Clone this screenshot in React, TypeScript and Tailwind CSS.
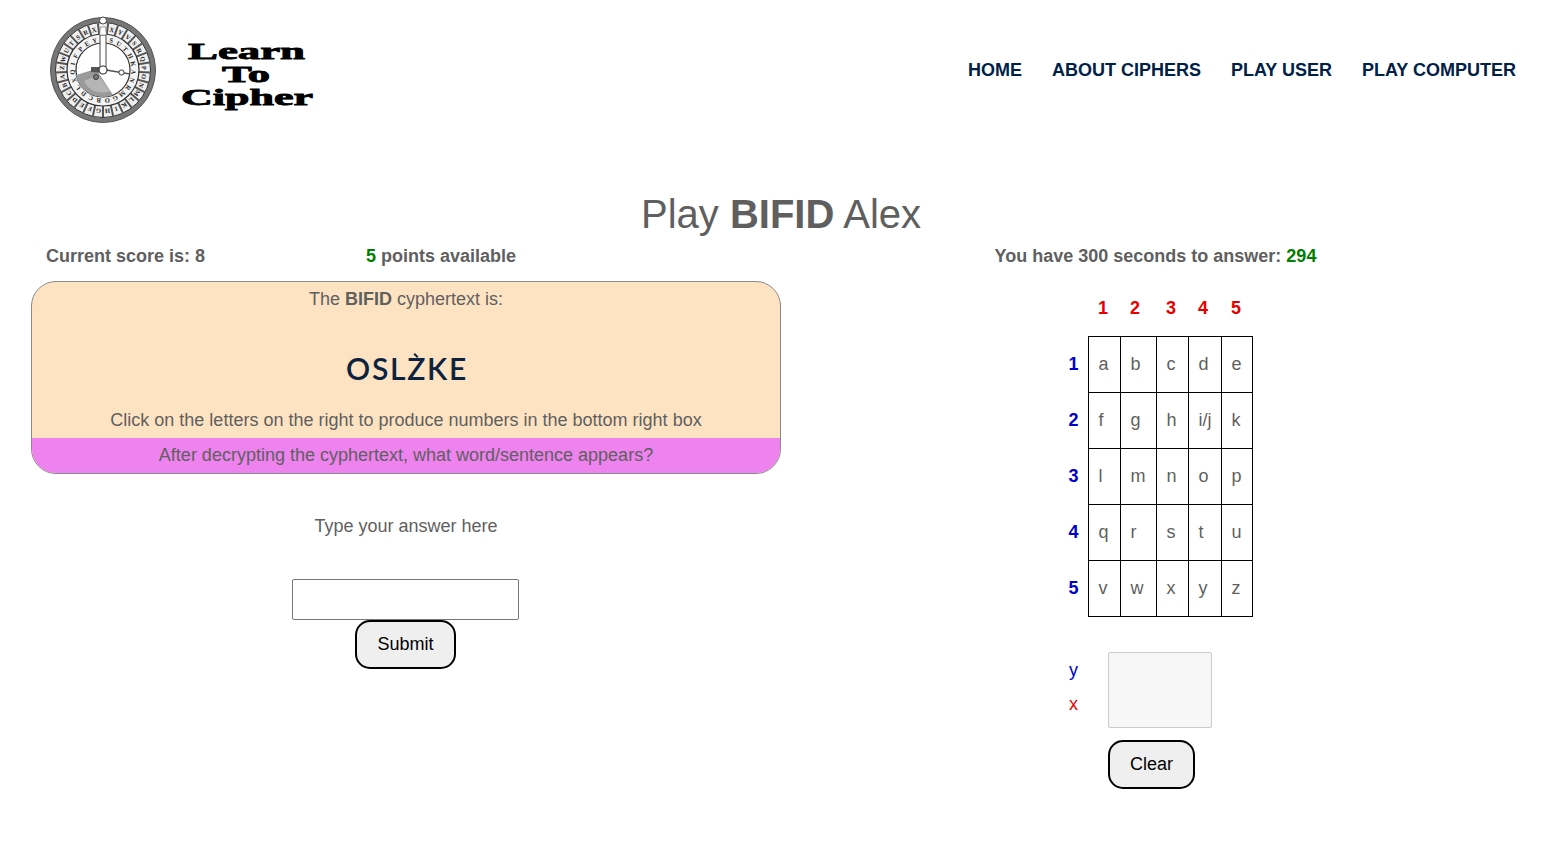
const sans = 'font-["Liberation_Sans",Arial,sans-serif]'

const navItems = ['HOME', 'ABOUT CIPHERS', 'PLAY USER', 'PLAY COMPUTER']
const colNumbers = [1, 2, 3, 4, 5]
const colWidths = ['w-[32px]', 'w-[36px]', 'w-[32px]', 'w-[33px]', 'w-[31px]']
const grid = [
  ['a', 'b', 'c', 'd', 'e'],
  ['f', 'g', 'h', 'i/j', 'k'],
  ['l', 'm', 'n', 'o', 'p'],
  ['q', 'r', 's', 't', 'u'],
  ['v', 'w', 'x', 'y', 'z'],
]

const outerLetters = 'TXYVSRQPONMLKIHGFEDCBAZWUTSRX'.split('')
const innerLetters = 'ZSUTHKANRMGOBCDLXQIFPEY'.split('')

// cipher wheel from the logo
function Wheel() {
  return (
    <g>
      <circle cx="55" cy="55" r="52.5" fill="#777" stroke="#555" strokeWidth="1" />
      <circle cx="55" cy="55" r="47.5" fill="#efefef" stroke="#333" strokeWidth="1" />
      {outerLetters.map((_, i) => (
        <line
          key={i}
          x1="55"
          y1="8"
          x2="55"
          y2="19"
          stroke="#555"
          strokeWidth="2"
          transform={`rotate(${((i + 0.5) * 360) / outerLetters.length} 55 55)`}
        />
      ))}
      {outerLetters.map((l, i) => (
        <text
          key={i}
          x="55"
          y="16"
          textAnchor="middle"
          fontSize="6.5"
          fontWeight="700"
          fontFamily="Liberation Serif, serif"
          fill="#222"
          transform={`rotate(${(i * 360) / outerLetters.length} 55 55)`}
        >
          {l}
        </text>
      ))}
      <circle cx="55" cy="55" r="36" fill="#f4f4f4" stroke="#333" strokeWidth="1.2" />
      <circle cx="55" cy="55" r="27" fill="#fff" stroke="#333" strokeWidth="1.2" />
      {innerLetters.map((l, i) => (
        <text
          key={i}
          x="55"
          y="26.5"
          textAnchor="middle"
          fontSize="6.5"
          fontWeight="700"
          fontFamily="Liberation Serif, serif"
          fill="#222"
          transform={`rotate(${(i * 360) / innerLetters.length} 55 55)`}
        >
          {l}
        </text>
      ))}
      <path d="M28 60 L48 54 L65 80 A27 27 0 0 1 28 60 Z" fill="#9a9a9a" />
      <path d="M36 66 L50 60 L62 76 A20 20 0 0 1 36 66 Z" fill="#b5b5b5" />
      <path d="M52 20 h6 v32 h-6 z" fill="#fff" stroke="#444" strokeWidth="1" />
      <path d="M52.5 12 h5 l1 8 h-7 z" fill="#fff" stroke="#666" strokeWidth="0.6" />
      <path d="M43 52 L55 52 L55 58 L43 57 Z" fill="#555" />
      <line x1="58" y1="55" x2="82" y2="59" stroke="#555" strokeWidth="1.6" />
      <circle cx="73.5" cy="57.5" r="2.6" fill="#fff" stroke="#333" strokeWidth="1" />
      <circle cx="55" cy="55" r="4" fill="#fff" stroke="#333" strokeWidth="1.2" />
      <circle cx="48" cy="62" r="2.6" fill="#777" stroke="#333" strokeWidth="0.8" />
      <circle cx="55" cy="5.5" r="3.5" fill="#fff" stroke="#444" strokeWidth="1" />
    </g>
  )
}

function Logo() {
  const word = (text: string, x: number, y: number, len: number) => (
    <text
      x={x}
      y={y}
      textLength={len}
      lengthAdjust="spacingAndGlyphs"
      fontFamily="Liberation Serif, serif"
      fontWeight="700"
      fontSize="23"
      fill="#000"
      stroke="#000"
      strokeWidth="0.8"
    >
      {text}
    </text>
  )
  return (
    <svg width="270" height="110" viewBox="0 0 270 110" className="block">
      <Wheel />
      {word('Learn', 140, 44, 117)}
      {word('To', 174, 67, 48)}
      {word('Cipher', 133, 90, 132)}
    </svg>
  )
}

export default function App() {
  return (
    <div className={`${sans} bg-white min-h-[847px] text-[18px] text-[#5f5f5f] overflow-hidden`}>
      {/* Header */}
      <header className="flex items-center justify-between pl-[48px] pr-[27px] h-[140px]">
        <Logo />
        <nav className="flex gap-[30px]">
          {navItems.map((item) => (
            <a key={item} className="font-bold text-[18px] text-[#002147]">
              {item}
            </a>
          ))}
        </nav>
      </header>

      <h1 className="pl-[19px] pt-[49px] text-center text-[40px] leading-[50px] text-[#5f5f5f]">
        Play <b>BIFID</b> Alex
      </h1>

      <main className="flex pl-[31px] pt-[4px]">
        {/* Left column */}
        <section className="w-[750px] shrink-0">
          <div className="flex pl-[15px] h-[27px] leading-[27px] font-bold">
            <div className="w-[320px]">Current score is: 8</div>
            <div>
              <span className="text-[#008000]">5</span> points available
            </div>
          </div>

          <div className="mt-[11px] h-[193px] flex flex-col rounded-[25px] border border-[#8a8a8a] bg-[#fee3c3] overflow-hidden text-center">
            <p className="pt-[6px] leading-[22px]">
              The <b>BIFID</b> cyphertext is:
            </p>
            <p className='mt-[36px] pl-[2px] font-["Lato",sans-serif] font-semibold text-[30px] leading-[44px] tracking-[1.7px] text-[#0c2340]'>
              OSL
              <span className="relative inline-block">
                Z
                <span className="absolute left-[8px] top-[7px] h-[5px] w-[2px] -rotate-45 bg-[#0c2340]" />
              </span>
              KE
            </p>
            <p className="mt-[18px] leading-[24px]">
              Click on the letters on the right to produce numbers in the bottom right box
            </p>
            <p className="mt-auto h-[35px] leading-[34px] bg-[#ee82ee]">
              After decrypting the cyphertext, what word/sentence appears?
            </p>
          </div>

          <p className="mt-[41px] text-center leading-[22px]">Type your answer here</p>

          <div className="mt-[42px] pr-[1px] flex flex-col items-center">
            <input
              type="text"
              className="block w-[227px] h-[41px] border border-[#767676] rounded-[2px] bg-white"
            />
            <button className="w-[101px] h-[49px] rounded-[15px] border-2 border-black bg-[#efefef] text-black text-[18px]">
              Submit
            </button>
          </div>
        </section>

        {/* Right column */}
        <section className="w-[750px] shrink-0 flex flex-col items-center">
          <div className="h-[27px] leading-[27px] font-bold pr-[1px]">
            You have 300 seconds to answer: <span className="text-[#008000]">294</span>
          </div>

          <div className="w-full pl-[256px] mt-[10px]">
            <table className="border-collapse table-fixed">
              <thead>
                <tr className="h-[56px]">
                  <th className="w-[51px]" />
                  {colNumbers.map((n, i) => (
                    <th key={n} className={`${colWidths[i]} text-left pl-[10px] pr-0 pb-0 pt-0 text-[#e60000] font-bold`}>
                      <span className="relative top-[1px]">{n}</span>
                    </th>
                  ))}
                </tr>
              </thead>
              <tbody>
                {grid.map((row, r) => (
                  <tr key={r} className="h-[56px]">
                    <th className="text-right pr-[9px] text-[#0000cd] font-bold">{r + 1}</th>
                    {row.map((letter) => (
                      <td key={letter} className="border border-black text-left pl-[10px] pr-0 py-0 font-normal">
                        {letter}
                      </td>
                    ))}
                  </tr>
                ))}
              </tbody>
            </table>

            <div className="flex pl-[31px] mt-[35px]">
              <div className="w-[40px] pt-[1px] pl-[1px] leading-[34px]">
                <div className="text-[#0000cd]">y</div>
                <div className="text-[#e60000]">x</div>
              </div>
              <div>
                <div className="w-[104px] h-[76px] bg-[#f7f7f7] border border-[#ccc] rounded-[2px]" />
                <button className="mt-[12px] w-[87px] h-[49px] rounded-[15px] border-2 border-black bg-[#efefef] text-black text-[18px]">
                  Clear
                </button>
              </div>
            </div>
          </div>
        </section>
      </main>
    </div>
  )
}
